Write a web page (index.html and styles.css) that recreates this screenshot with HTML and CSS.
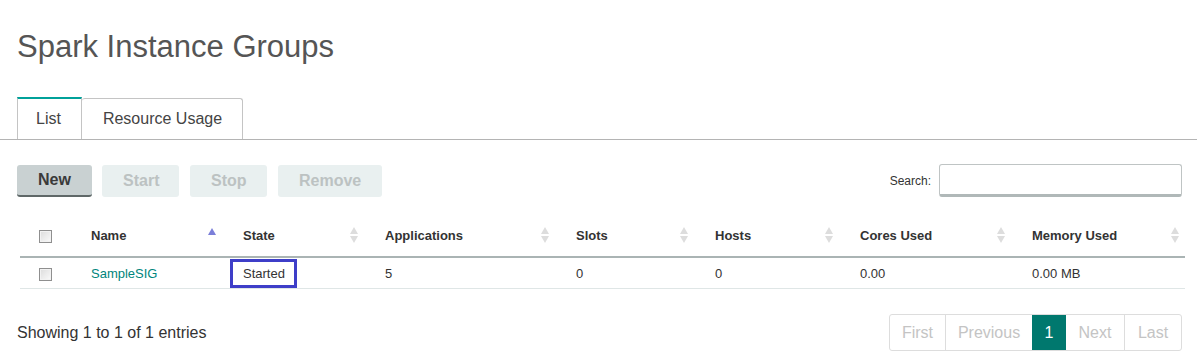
FILE: index.html
```html
<!DOCTYPE html>
<html lang="en">
  <head>
    <meta charset="UTF-8" />
    <meta name="viewport" content="width=device-width, initial-scale=1.0" />
    <title>Spark Instance Groups</title>
    <link rel="stylesheet" href="styles.css">
  </head>
  <body>
    <div class="page">
      <h1>Spark Instance Groups</h1>

      <div class="tabs">
        <div class="tab active">List</div>
        <div class="tab">Resource Usage</div>
      </div>

      <div class="toolbar">
        <div class="actions">
          <button class="btn btn-primary">New</button>
          <button class="btn" disabled>Start</button>
          <button class="btn" disabled>Stop</button>
          <button class="btn" disabled>Remove</button>
        </div>
        <label class="search">
          Search:
          <input type="text" />
        </label>
      </div>

      <table class="grid">
        <colgroup>
          <col style="width: 50px" />
          <col style="width: 152px" />
          <col style="width: 142px" />
          <col style="width: 191px" />
          <col style="width: 139px" />
          <col style="width: 145px" />
          <col style="width: 172px" />
          <col style="width: 174px" />
        </colgroup>
        <thead>
          <tr>
            <th class="check"><span class="box"></span></th>
            <th class="sorted">Name<span class="sort-up"></span></th>
            <th class="sortable">State<span class="sort-both"></span></th>
            <th class="sortable">Applications<span class="sort-both"></span></th>
            <th class="sortable">Slots<span class="sort-both"></span></th>
            <th class="sortable">Hosts<span class="sort-both"></span></th>
            <th class="sortable">Cores Used<span class="sort-both"></span></th>
            <th class="sortable">Memory Used<span class="sort-both"></span></th>
          </tr>
        </thead>
        <tbody>
          <tr>
            <td class="check"><span class="box"></span></td>
            <td><a href="#">SampleSIG</a></td>
            <td><span class="highlight">Started</span></td>
            <td>5</td>
            <td>0</td>
            <td>0</td>
            <td>0.00</td>
            <td>0.00 MB</td>
          </tr>
        </tbody>
      </table>

      <div class="footer">
        <div class="info">Showing 1 to 1 of 1 entries</div>
        <div class="pager">
          <span class="page-link first">First</span>
          <span class="page-link prev">Previous</span>
          <span class="page-link current">1</span>
          <span class="page-link next">Next</span>
          <span class="page-link last">Last</span>
        </div>
      </div>
    </div>
  </body>
</html>
```

FILE: styles.css
```css
body,
html {
  margin: 0;
  padding: 0;
  background-color: #ffffff;
  font-family: "Liberation Sans", Arial, sans-serif;
  color: #333333;
}
.page {
  padding: 0 15px 0 17px;
}
h1 {
  margin: 0;
  padding-top: 29px;
  font-size: 31px;
  font-weight: normal;
  line-height: 36px;
  color: #555555;
}
.tabs {
  display: flex;
  margin: 33px -15px 0 -17px;
  padding-left: 17px;
  border-bottom: 1px solid #b4b4b4;
  height: 41px;
}
.tab {
  box-sizing: border-box;
  height: 41px;
  margin-bottom: -1px;
  padding: 0 20px 0 21px;
  border: 1px solid #c4c4c4;
  border-bottom: none;
  border-radius: 3px 3px 0 0;
  font-size: 16px;
  line-height: 40px;
  color: #444444;
  background-color: #ffffff;
}
.tab.active {
  padding: 0 20px 0 18px;
  height: 42px;
  margin-top: -1px;
  border-top: 2px solid #00a19a;
  border-radius: 0;
  line-height: 39px;
}
.tab + .tab {
  border-left: none;
}
.toolbar {
  display: flex;
  justify-content: space-between;
  align-items: center;
  margin-top: 24px;
}
.actions {
  display: flex;
  gap: 10px;
}
.btn {
  height: 32px;
  padding: 0 21px;
  border: none;
  border-radius: 3px;
  background-color: #e9f0f0;
  color: #bcc2c2;
  font-family: "Liberation Sans", Arial, sans-serif;
  font-size: 16px;
  font-weight: bold;
}
.btn-primary {
  background-color: #c9d1d2;
  color: #3a3a3a;
  border-bottom: 2px solid #5f6868;
}
.actions .btn:nth-child(1) { width: 75px; }
.actions .btn:nth-child(2) { width: 77px; }
.actions .btn:nth-child(3) { width: 77px; margin-left: 1px; }
.actions .btn:nth-child(4) { width: 104px; margin-left: 1px; }
.search {
  display: flex;
  align-items: center;
  gap: 8px;
  font-size: 12px;
  color: #333333;
}
.search input {
  box-sizing: border-box;
  width: 243px;
  height: 33px;
  border: 1px solid #bfc4c4;
  border-bottom: 3px solid #b0b8b8;
  border-radius: 3px;
}
.grid {
  table-layout: fixed;
  border-collapse: collapse;
  width: 1165px;
  margin: 18px 0 0 3px;
  font-size: 13px;
}
.grid th {
  position: relative;
  height: 41px;
  padding: 0 0 0 21px;
  text-align: left;
  font-size: 13px;
  font-weight: bold;
  color: #333333;
  border-bottom: 2px solid #aab4b4;
}
.grid td {
  height: 30px;
  padding: 0 0 0 21px;
  border-bottom: 1px solid #dfe6e6;
  color: #333333;
}
.grid .check {
  padding: 0;
  text-align: center;
}
.box {
  display: inline-block;
  box-sizing: border-box;
  width: 13px;
  height: 13px;
  vertical-align: middle;
  border: 1px solid #8f8f8f;
  background: linear-gradient(135deg, #dcdcdc, #fafafa);
  box-shadow: inset 0 0 0 1px #f2f2f2;
}
.grid a {
  color: #00857c;
  text-decoration: none;
}
.highlight {
  display: inline-block;
  margin-left: -13px;
  padding: 3px 9px 3px 10px;
  line-height: 17px;
  border: 3px solid #3e3ec8;
  vertical-align: middle;
}
.sort-up {
  position: absolute;
  right: 6px;
  top: 13px;
  width: 0;
  height: 0;
  border-left: 4px solid transparent;
  border-right: 4px solid transparent;
  border-bottom: 7px solid #7b7fd9;
}
.sort-both {
  position: absolute;
  right: 5px;
  top: 12px;
  width: 10px;
  height: 16px;
}
.sort-both::before,
.sort-both::after {
  content: "";
  position: absolute;
  left: 1px;
  width: 0;
  height: 0;
  border-left: 4px solid transparent;
  border-right: 4px solid transparent;
}
.sort-both::before {
  top: 0;
  border-bottom: 7px solid #dddddd;
}
.sort-both::after {
  bottom: 0;
  border-top: 7px solid #dddddd;
}
.footer {
  display: flex;
  justify-content: space-between;
  align-items: center;
  margin-top: 25px;
}
.info {
  font-size: 16px;
  color: #333333;
}
.pager {
  display: flex;
  border: 1px solid #dddddd;
  border-radius: 3px;
  height: 35px;
}
.page-link {
  box-sizing: border-box;
  display: flex;
  align-items: center;
  justify-content: center;
  font-size: 16px;
  color: #c4c4c4;
  border-left: 1px solid #dddddd;
}
.page-link.first {
  width: 55px;
  border-left: none;
}
.page-link.prev {
  width: 87px;
}
.page-link.current {
  width: 34px;
  background-color: #00786e;
  color: #ffffff;
  border-left: none;
}
.page-link.next {
  width: 58px;
  border-left: none;
}
.page-link.last {
  width: 57px;
}
```
